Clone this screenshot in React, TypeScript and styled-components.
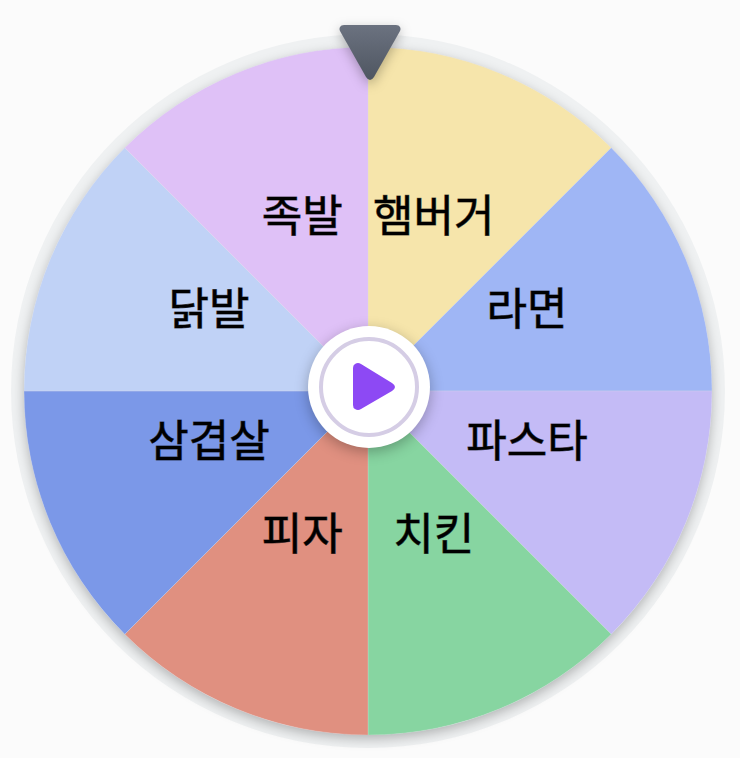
import React from "react";
import styled, { createGlobalStyle } from "styled-components";

const GlobalStyle = createGlobalStyle`
  * { box-sizing: border-box; }
  body {
    margin: 0;
    background: #fbfbfb;
    font-family: "Noto Sans CJK KR", "Noto Sans", sans-serif;
  }
`;

const Page = styled.main`
  padding: 34px 15px 10px 11px;
`;

const Rim = styled.div`
  position: relative;
  width: 100%;
  aspect-ratio: 1;
  padding: 13px;
  border-radius: 50%;
  background: #eff1f2;
`;

const Disc = styled.div`
  width: 100%;
  height: 100%;
  border-radius: 50%;
  box-shadow: 0 4px 12px rgba(0, 0, 0, 0.26);
`;

const WheelChart = styled.svg`
  display: block;
  width: 100%;
  height: 100%;
`;

const Slice = styled.path`
  stroke: rgba(222, 222, 230, 0.25);
  stroke-width: 1px;
`;

const SliceLabel = styled.text`
  font-size: 44px;
  font-weight: 400;
  fill: #000;
  stroke: rgba(0, 0, 0, 0.6);
  stroke-width: 1px;
  text-anchor: middle;
`;

const Pointer = styled.svg`
  position: absolute;
  top: -9px;
  left: 50%;
  width: 62px;
  height: 56px;
  margin-left: -29px;
  overflow: visible;
  filter: drop-shadow(0 4px 6px rgba(0, 0, 0, 0.28));
`;

const SpinButton = styled.button`
  position: absolute;
  top: calc(50% - 4px);
  left: calc(50% + 1px);
  display: grid;
  place-items: center;
  width: 122px;
  height: 122px;
  padding: 0;
  border: 0;
  border-radius: 50%;
  transform: translate(-50%, -50%);
  background: #fff;
  box-shadow: 0 4px 14px rgba(0, 0, 0, 0.28);
  cursor: pointer;
`;

const SpinRing = styled.span`
  display: grid;
  place-items: center;
  width: 100px;
  height: 100px;
  border: 4px solid #d5cde5;
  border-radius: 50%;
`;

const PlayIcon = styled.svg`
  width: 42px;
  height: 48px;
  margin-left: 10px;
`;

const SIZE = 688;
const CENTER = SIZE / 2;
const LABEL_RADIUS = CENTER / 2;

const slices = [
  { name: "햄버거", color: "#f6e5ab" },
  { name: "라면", color: "#9fb6f5" },
  { name: "파스타", color: "#c4bbf6" },
  { name: "치킨", color: "#87d5a1" },
  { name: "피자", color: "#e09080" },
  { name: "삼겹살", color: "#7b98e8" },
  { name: "닭발", color: "#c0d2f6" },
  { name: "족발", color: "#dfc1f7" },
];

const STEP = (Math.PI * 2) / slices.length;

function pointAt(angle: number, radius: number) {
  return {
    x: CENTER + Math.sin(angle) * radius,
    y: CENTER - Math.cos(angle) * radius,
  };
}

function slicePath(index: number) {
  const start = pointAt(index * STEP, CENTER);
  const end = pointAt((index + 1) * STEP, CENTER);
  return `M${CENTER} ${CENTER}L${start.x} ${start.y}A${CENTER} ${CENTER} 0 0 1 ${end.x} ${end.y}Z`;
}

export default function App() {
  return (
    <>
      <GlobalStyle />
      <Page>
        <Rim>
          <Disc>
            <WheelChart viewBox={`0 0 ${SIZE} ${SIZE}`}>
              {slices.map((slice, index) => (
                <Slice key={slice.name} d={slicePath(index)} fill={slice.color} />
              ))}
              {slices.map((slice, index) => {
                const { x, y } = pointAt((index + 0.5) * STEP, LABEL_RADIUS);
                return (
                  <SliceLabel key={slice.name} x={x} y={y}>
                    {slice.name}
                  </SliceLabel>
                );
              })}
            </WheelChart>
          </Disc>
          <Pointer viewBox="0 0 62 56" aria-hidden="true">
            <defs>
              <linearGradient id="pointerFill" x1="0" y1="0" x2="0" y2="1">
                <stop offset="0" stopColor="#6b7280" />
                <stop offset="1" stopColor="#4f5661" />
              </linearGradient>
            </defs>
            <path
              d="M5 0H57Q60 0 61 2Q62 4 61 6L35 52Q31 58 27 52L1 6Q0 4 1 2Q2 0 5 0Z"
              fill="url(#pointerFill)"
            />
          </Pointer>
          <SpinButton type="button" aria-label="돌리기">
            <SpinRing>
              <PlayIcon viewBox="0 0 42 48" aria-hidden="true">
                <path
                  d="M0 5Q0 2 2 1Q5 -1 8 1L39 20Q42 22 42 24Q42 26 39 28L8 46Q5 48 2 46Q0 45 0 42Z"
                  fill="#8d49f4"
                />
              </PlayIcon>
            </SpinRing>
          </SpinButton>
        </Rim>
      </Page>
    </>
  );
}
